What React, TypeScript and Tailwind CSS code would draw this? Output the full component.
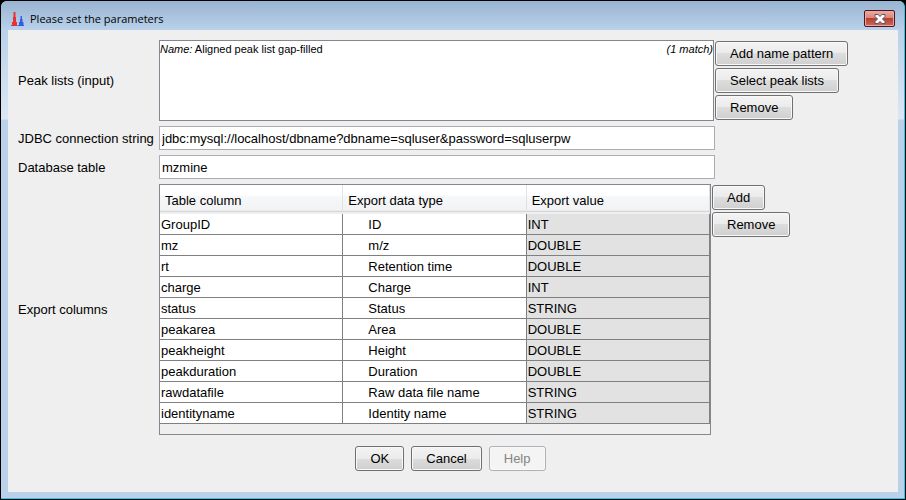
import type { ReactNode } from 'react';

const rows = [
  ['GroupID', 'ID', 'INT'],
  ['mz', 'm/z', 'DOUBLE'],
  ['rt', 'Retention time', 'DOUBLE'],
  ['charge', 'Charge', 'INT'],
  ['status', 'Status', 'STRING'],
  ['peakarea', 'Area', 'DOUBLE'],
  ['peakheight', 'Height', 'DOUBLE'],
  ['peakduration', 'Duration', 'DOUBLE'],
  ['rawdatafile', 'Raw data file name', 'STRING'],
  ['identityname', 'Identity name', 'STRING'],
];

const headers = ['Table column', 'Export data type', 'Export value'];

function PushButton({ children, disabled = false }: { children: ReactNode; disabled?: boolean }) {
  return (
    <button
      type="button"
      disabled={disabled}
      className="h-[25px] whitespace-nowrap rounded-[3px] border border-[#707070] bg-[linear-gradient(#f3f3f3,#ebebeb_50%,#dddddd_50%,#cfcfcf)] px-[14px] leading-[22px] shadow-[inset_0_0_0_1px_#f8f8f8] disabled:border-[#adb2b5] disabled:bg-none disabled:bg-[#f4f4f4] disabled:text-[#838383]"
    >
      {children}
    </button>
  );
}

function TextRow({ id, label, value }: { id: string; label: string; value: string }) {
  return (
    <div className="flex items-center">
      <label htmlFor={id} className="w-[141px] shrink-0 whitespace-nowrap pt-[2px]">{label}</label>
      <input
        id={id}
        type="text"
        defaultValue={value}
        className="h-6 min-w-0 flex-1 border border-[#abadb3] bg-white px-[2px] outline-none"
      />
      <div className="w-[183px] shrink-0" />
    </div>
  );
}

export default function App() {
  return (
    <div className="bg-black p-px font-['Liberation_Sans',Arial,sans-serif] text-[13px] text-black">
      <div className="rounded-t-[6px] border-b border-r border-b-[#20cdf0] border-r-[#20cdf0] bg-[#b9d1ea] bg-[linear-gradient(#99b4d1,#b9d1ea_29px,#dce7f5_118px,#b9d1ea_119px)] bg-no-repeat px-[6px] pb-[6px] pl-[7px]">
        <header className="flex h-[29px] items-center pl-[3px] pr-[3px] pt-[6px]">
          <svg width="13" height="15" viewBox="0 0 13 15" aria-hidden="true">
            <path d="M0 15v-1h1v-3h1V6h.500V1h2v5H5v5h1v3h.500v1z" fill="#e83038" />
            <path d="M7 15v-1h1v-3h1V8h.500V5h1.500v3h.500v3h1v3h.500v1z" fill="#3060e8" />
          </svg>
          <h1 className="ml-[6px] flex-1 font-['Open_Sans',sans-serif] text-[11px] leading-4">Please set the parameters</h1>
          <button
            type="button"
            aria-label="Close"
            className="flex h-[17px] w-[31px] items-center justify-center rounded-[2px] border border-[#4a1820] bg-[linear-gradient(#e9aca5,#d98379_48%,#b8402c_50%,#cc6a5a)] shadow-[inset_0_0_0_1px_#eba79f]"
          >
            <svg width="12" height="10" viewBox="0 0 12 10" aria-hidden="true">
              <path d="M1 .5h3l2 2 2-2h3v2L8.500 5 11 7.500v2H8l-2-2-2 2H1v-2L3.500 5 1 2.500z" fill="#fff" stroke="#535666" />
            </svg>
          </button>
        </header>

        <main className="bg-[#efefef] pb-[21px] pl-[10px] pt-[10px]">
          <div className="flex flex-col gap-[5px]">
            <div className="flex items-center">
              <div className="w-[141px] shrink-0" id="peak-lists">Peak lists (input)</div>
              <div
                aria-labelledby="peak-lists"
                role="listbox"
                className="mr-px h-[81px] min-w-0 flex-1 border border-[#828790] bg-white text-[11px] leading-4"
              >
                <div role="option" aria-selected="false" className="flex justify-between whitespace-nowrap">
                  <span><i>Name:</i> Aligned peak list gap-filled</span>
                  <i>(1 match)</i>
                </div>
              </div>
              <div className="flex w-[183px] shrink-0 flex-col items-start gap-[2px]">
                <PushButton>Add name pattern</PushButton>
                <PushButton>Select peak lists</PushButton>
                <PushButton>Remove</PushButton>
              </div>
            </div>

            <TextRow id="jdbc" label="JDBC connection string" value="jdbc:mysql://localhost/dbname?dbname=sqluser&password=sqluserpw" />
            <TextRow id="dbtable" label="Database table" value="mzmine" />

            <div className="flex items-center">
              <div className="w-[141px] shrink-0" id="export-columns">Export columns</div>
              <div className="mr-px min-w-0 flex-1 border border-[#828790] pb-[10px]">
                <table aria-labelledby="export-columns" className="w-full table-fixed border-separate border-spacing-0 text-left">
                  <thead>
                    <tr>
                      {headers.map((h) => (
                        <th
                          key={h}
                          className="h-[29px] border-b-2 border-r border-b-[#efefef] border-r-[#e0e2e4] bg-[linear-gradient(#ffffff_38%,#f7f8fa_40%,#f1f2f4_94%,#d5d5d5_96%)] bg-clip-padding pb-0 pl-[5px] pt-1 font-normal"
                        >
                          {h}
                        </th>
                      ))}
                    </tr>
                  </thead>
                  <tbody>
                    {rows.map(([name, type, value]) => (
                      <tr key={name}>
                        <td className="h-[21px] border-b border-r border-[#808080] bg-white p-0 pl-px pt-px leading-[19px]">{name}</td>
                        <td className="h-[21px] border-b border-r border-[#808080] bg-white p-0 pl-[25px] pt-px leading-[19px]">{type}</td>
                        <td className="h-[21px] border-b border-r border-[#808080] bg-[#e2e2e2] p-0 pl-px pt-px leading-[19px]">{value}</td>
                      </tr>
                    ))}
                  </tbody>
                </table>
              </div>
              <div className="flex w-[186px] shrink-0 flex-col items-start gap-[2px] self-start pt-px">
                <PushButton>Add</PushButton>
                <PushButton>Remove</PushButton>
              </div>
            </div>
          </div>

          <footer className="mt-[11px] flex justify-center gap-[7px] pr-[15px]">
            <PushButton>OK</PushButton>
            <PushButton>Cancel</PushButton>
            <PushButton disabled>Help</PushButton>
          </footer>
        </main>
      </div>
    </div>
  );
}
